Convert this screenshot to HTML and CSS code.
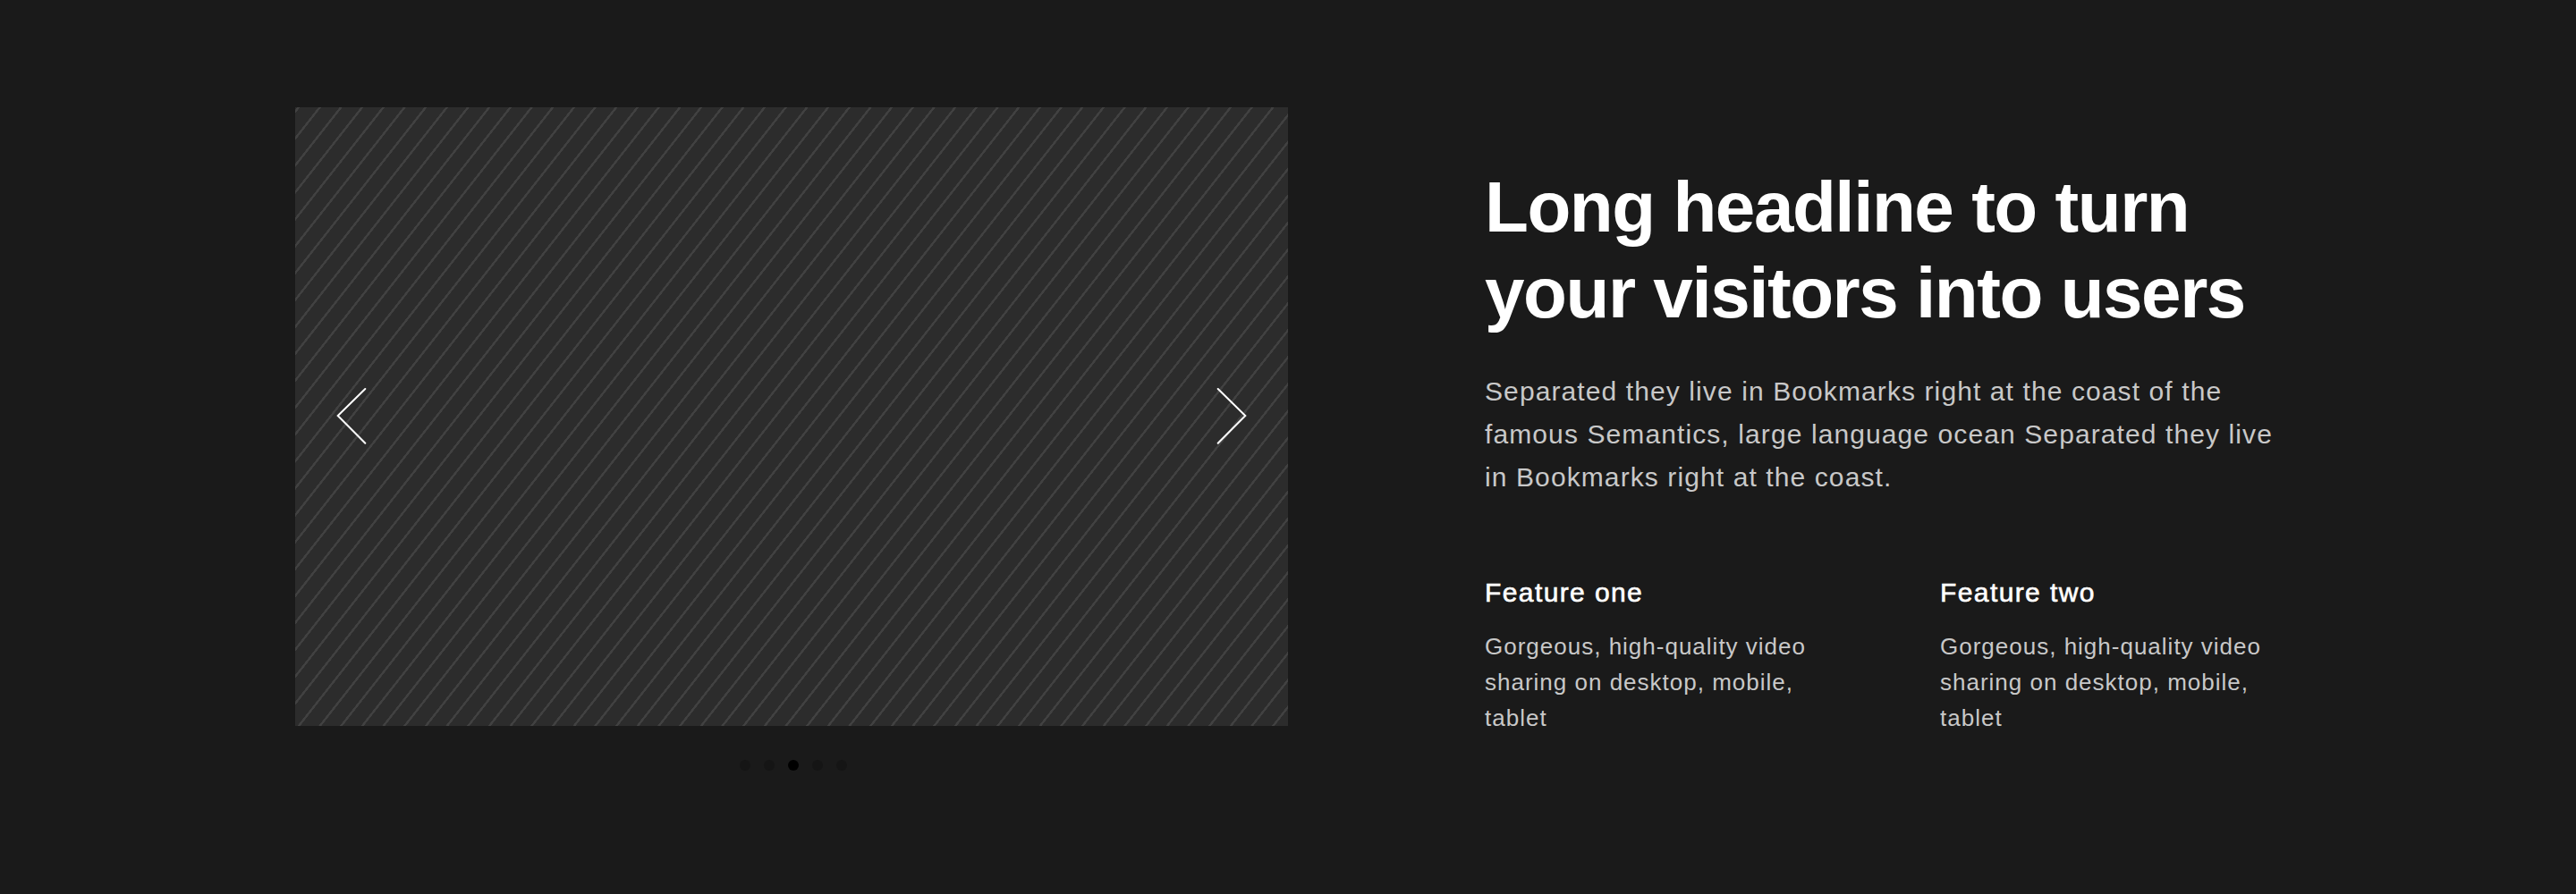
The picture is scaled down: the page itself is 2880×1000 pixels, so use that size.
FILE: index.html
```html
<!DOCTYPE html>
<html lang="en">
<head>
<meta charset="utf-8">
<title>Feature section</title>
<link rel="stylesheet" href="styles.css">
</head>
<body>
<section class="section">
  <div class="slider-col">
    <div class="slide">
      <button class="arrow arrow-prev" aria-label="Previous">
        <svg width="34" height="64" viewBox="0 0 34 64"><polyline points="32.3,2 1.7,32 32.3,62.7" fill="none" stroke="#fff" stroke-width="2" stroke-linecap="round" stroke-linejoin="miter"/></svg>
      </button>
      <button class="arrow arrow-next" aria-label="Next">
        <svg width="34" height="64" viewBox="0 0 34 64"><polyline points="1.7,2 32.3,32 1.7,62.7" fill="none" stroke="#fff" stroke-width="2" stroke-linecap="round" stroke-linejoin="miter"/></svg>
      </button>
    </div>
    <div class="dots">
      <span class="dot"></span>
      <span class="dot"></span>
      <span class="dot dot-active"></span>
      <span class="dot"></span>
      <span class="dot"></span>
    </div>
  </div>
  <div class="text">
    <h1 class="headline">Long headline to turn your visitors into users</h1>
    <p class="lead">Separated they live in Bookmarks right at the coast of the famous Semantics, large language ocean Separated they live in Bookmarks right at the coast.</p>
    <div class="features">
      <div class="feature">
        <h3 class="feature-title">Feature one</h3>
        <p class="feature-text">Gorgeous, high-quality video sharing on desktop, mobile, tablet</p>
      </div>
      <div class="feature">
        <h3 class="feature-title">Feature two</h3>
        <p class="feature-text">Gorgeous, high-quality video sharing on desktop, mobile, tablet</p>
      </div>
    </div>
  </div>
</section>
</body>
</html>
```

FILE: styles.css
```css
html, body {
  margin: 0;
  padding: 0;
  background: #1a1a1a;
}

body {
  font-family: "Liberation Sans", Arial, Helvetica, sans-serif;
  color: #ffffff;
}

.section {
  display: grid;
  grid-template-columns: 1110px 890px;
  column-gap: 220px;
  padding: 120px 330px;
  align-items: start;
}

.slider-col {
  display: flex;
  flex-direction: column;
  align-items: center;
}

.slide {
  position: relative;
  width: 1110px;
  height: 692px;
  background-color: #2c2c2c;
  background-image: repeating-linear-gradient(128.2deg,
    #2c2c2c 0px,
    #2c2c2c 1.7px,
    #414141 2px,
    #414141 4.1px,
    #2c2c2c 4.4px,
    #2c2c2c 18.61px);
}

.arrow {
  position: absolute;
  top: 313px;
  width: 34px;
  height: 64px;
  padding: 0;
  margin: 0;
  border: 0;
  background: none;
  cursor: pointer;
  display: block;
}

.arrow svg {
  display: block;
}

.arrow-prev {
  left: 46px;
}

.arrow-next {
  right: 46px;
}

.dots {
  display: flex;
  gap: 15px;
  margin-top: 38px;
  margin-left: 4px;
}

.dot {
  width: 12px;
  height: 12px;
  border-radius: 50%;
  background: #151515;
}

.dot-active {
  background: #000000;
}

.text {
  padding-top: 64px;
}

.headline {
  margin: 0;
  font-size: 80px;
  line-height: 96px;
  font-weight: 700;
  letter-spacing: -1.45px;
  color: #ffffff;
}

.lead {
  margin: 38px 0 0;
  font-size: 30px;
  line-height: 48px;
  letter-spacing: 1.1px;
  color: #c8c8c8;
}

.features {
  display: grid;
  grid-template-columns: 381px 381px;
  column-gap: 128px;
  margin-top: 87px;
}

.feature-title {
  margin: 0;
  font-size: 30px;
  line-height: 36px;
  font-weight: 400;
  letter-spacing: 1.4px;
  -webkit-text-stroke: 0.6px #ffffff;
  color: #ffffff;
}

.feature-text {
  margin: 22px 0 0;
  font-size: 26px;
  line-height: 40px;
  letter-spacing: 1px;
  color: #c8c8c8;
}
```
